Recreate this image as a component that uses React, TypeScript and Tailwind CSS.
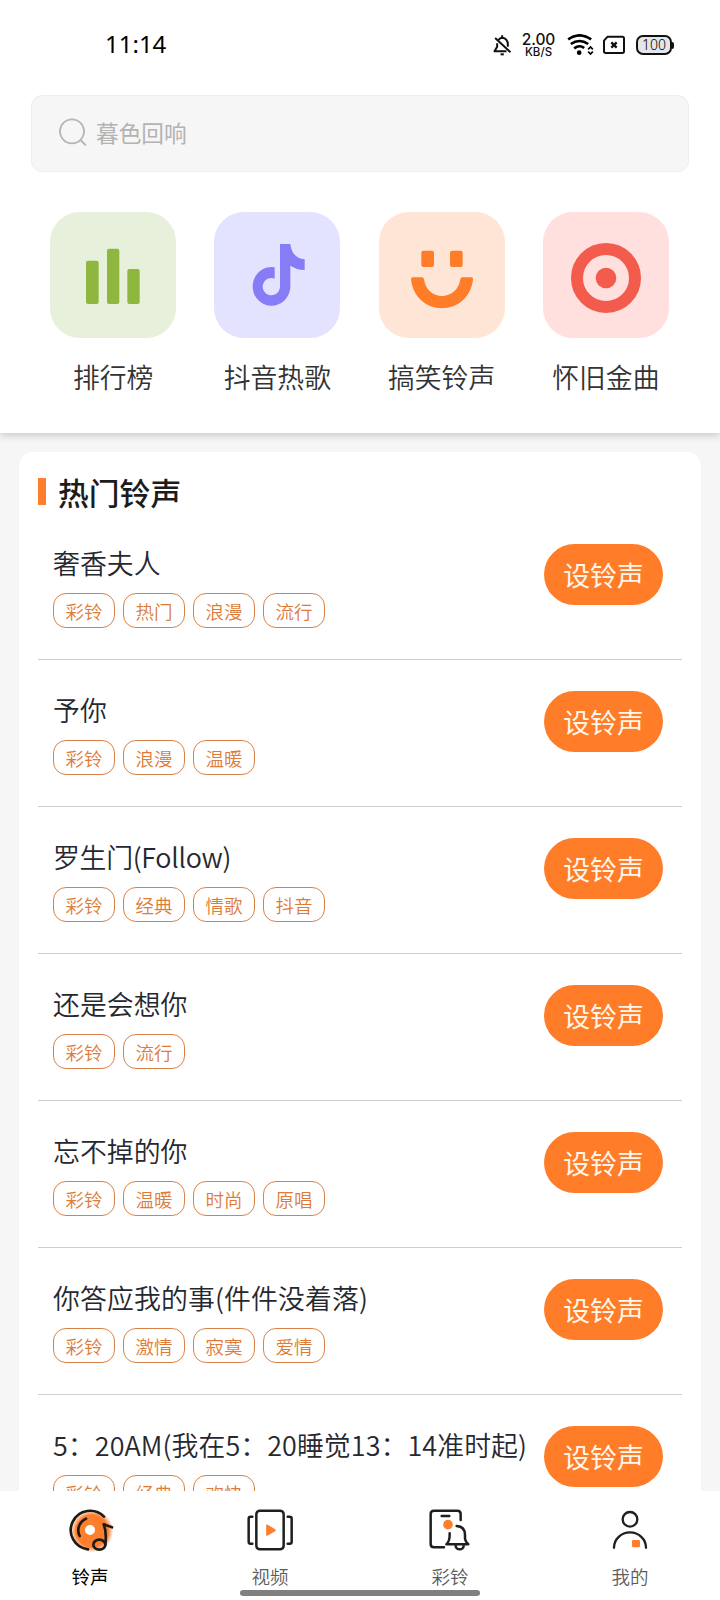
import React from 'react';

const categories = [
  { label: '排行榜', bg: 'bg-[#e7f0da]', icon: <ChartIcon /> },
  { label: '抖音热歌', bg: 'bg-[#e4e3ff]', icon: <NoteIcon /> },
  { label: '搞笑铃声', bg: 'bg-[#ffe5d5]', icon: <SmileIcon /> },
  { label: '怀旧金曲', bg: 'bg-[#ffe0de]', icon: <RecordIcon /> },
];

const songs = [
  { title: '奢香夫人', tags: ['彩铃', '热门', '浪漫', '流行'] },
  { title: '予你', tags: ['彩铃', '浪漫', '温暖'] },
  { title: '罗生门(Follow)', tags: ['彩铃', '经典', '情歌', '抖音'], tracking: 'tracking-[-0.3px]' },
  { title: '还是会想你', tags: ['彩铃', '流行'] },
  { title: '忘不掉的你', tags: ['彩铃', '温暖', '时尚', '原唱'] },
  { title: '你答应我的事(件件没着落)', tags: ['彩铃', '激情', '寂寞', '爱情'], tracking: 'tracking-[0.1px]' },
  { title: '5：20AM(我在5：20睡觉13：14准时起)', tags: ['彩铃', '经典', '欢快'], tracking: 'tracking-[0.08px]' },
];

const tabs = [
  { label: '铃声', icon: <RingtoneTabIcon />, active: true },
  { label: '视频', icon: <VideoTabIcon />, active: false },
  { label: '彩铃', icon: <BellTabIcon />, active: false },
  { label: '我的', icon: <UserTabIcon />, active: false },
];

function ChartIcon() {
  return (
    <svg viewBox="60 36 378 378" className="w-full h-full" fill="#8fb63f">
      <rect x="168" y="182" width="38" height="130" rx="6" />
      <rect x="231" y="146" width="37" height="166" rx="6" />
      <rect x="292" y="207" width="37" height="105" rx="6" />
    </svg>
  );
}

function NoteIcon() {
  return (
    <svg viewBox="553 36 378 378" className="w-full h-full" fill="#867cf6">
      <path d="M751 132H782C785 160 800 176 825 178V210C808 210 795 205 782 197V262A56.5 58 0 1 1 735 202V236A26 26 0 1 0 751 262Z" />
    </svg>
  );
}

function SmileIcon() {
  return (
    <svg viewBox="57 36 378 378" className="w-full h-full" fill="#ff7d29">
      <rect x="184" y="152" width="38" height="49" rx="6" />
      <rect x="270" y="152" width="38" height="49" rx="6" />
      <path d="M158 232H186Q191 232 192 238C196 270 220 288 246 288S297 270 301 238Q302 232 307 232H334Q340 232 339 238C334 290 294 325 246 325S158 290 153 238Q153 232 158 232Z" />
    </svg>
  );
}

function RecordIcon() {
  return (
    <svg viewBox="551 36 378 378" className="w-full h-full">
      <circle cx="740" cy="234" r="87" fill="none" stroke="#f35b4c" strokeWidth="36" />
      <circle cx="740" cy="234" r="31" fill="#f35b4c" />
    </svg>
  );
}

function RingtoneTabIcon() {
  return (
    <svg viewBox="198 318 144 144" className="w-12 h-12" fill="none" stroke="#1d1a18" strokeWidth="8" strokeLinecap="round" strokeLinejoin="round">
      <defs>
        <radialGradient id="disc">
          <stop offset="0.75" stopColor="#fd7e2c" />
          <stop offset="1" stopColor="#fd7e2c" stopOpacity="0" />
        </radialGradient>
      </defs>
      <circle cx="276" cy="393" r="64" fill="url(#disc)" stroke="none" />
      <circle cx="270" cy="390" r="15" fill="#fff" stroke="none" />
      <path d="M312 350A58 58 0 1 0 264 448" />
      <path d="M258 356A38 38 0 0 0 239 408" />
      <ellipse cx="298" cy="434" rx="18" ry="15" />
      <path d="M316 434C319 410 318 390 311 373L336 382" />
    </svg>
  );
}

function VideoTabIcon() {
  return (
    <svg viewBox="738 318 144 144" className="w-12 h-12" fill="none" stroke="#1f1f1f" strokeWidth="7.5" strokeLinecap="round" strokeLinejoin="round">
      <rect x="769" y="332" width="82" height="116" rx="11" />
      <path d="M757 350H752Q746 350 746 356V425Q746 431 752 431H757" />
      <path d="M863 350H869Q875 350 875 356V425Q875 431 869 431H863" />
      <path d="M801 376V405L825 390.500Z" fill="#fd7e2c" stroke="#fd7e2c" strokeWidth="5" />
    </svg>
  );
}

function BellTabIcon() {
  return (
    <svg viewBox="198 318 144 144" className="w-12 h-12" fill="none" stroke="#1f1f1f" strokeWidth="7.5" strokeLinecap="round" strokeLinejoin="round">
      <path d="M302 360V342Q302 332 292 332H222Q212 332 212 342V432Q212 442 222 442H252" />
      <path d="M245 348H268" />
      <circle cx="264" cy="374" r="14.500" fill="#fd7e2c" stroke="none" />
      <path d="M290 378C308 379 315 391 315 405V416Q316 426 325 433H259Q270 423 269 400" />
      <path d="M287 437A12 11 0 0 0 311 437" />
    </svg>
  );
}

function UserTabIcon() {
  return (
    <svg viewBox="738 318 144 144" className="w-12 h-12" fill="none" stroke="#1f1f1f" strokeWidth="7" strokeLinecap="round">
      <circle cx="810" cy="358" r="22" />
      <path d="M762 443A48 46 0 0 1 858 443" />
      <rect x="816" y="420" width="24" height="22" rx="4" fill="#fd7e2c" stroke="none" />
    </svg>
  );
}

function StatusBar() {
  return (
    <div className="h-[95px] pl-[105px] pr-[46px] pb-[5px] flex items-center justify-between text-black">
      <span className="font-['Noto_Sans'] text-[24px] leading-none pb-[2px]">11:14</span>
      <div className="flex items-center">
        <svg viewBox="100 42 56 66" className="w-[19px] h-[22px] mr-[10px]" fill="none" stroke="#111" strokeWidth="6" strokeLinejoin="round">
          <path d="M116 60Q120 53 127 53Q144 55 144 74V80M112 70V80L104 94H140" />
          <path d="M127 46V53M106 54L152 97" />
          <path d="M122 103H132" />
        </svg>
        <div className="w-[33px] mr-[12px] flex flex-col items-center font-['Inter'] text-[#111]">
          <span className="text-[15.500px] font-medium leading-[13px] tracking-[-0.1px]">2.00</span>
          <span className="text-[11.500px] font-medium leading-[12px]">KB/S</span>
        </div>
        <svg viewBox="322 42 80 66" className="w-[27px] h-[22px] mr-[9px]" fill="none" stroke="#000" strokeWidth="8">
          <path d="M325 58Q359 34 394 58" />
          <path d="M333 72Q359 54 385 72" />
          <path d="M343 85Q359 73 373 84" />
          <circle cx="358" cy="98" r="7" fill="#000" stroke="none" />
          <path d="M385 88L392 81L399 88M385 95L392 102L399 95" strokeWidth="5" />
        </svg>
        <svg viewBox="429 42 66 66" className="w-[22px] h-[22px] mr-[11px]" fill="none" stroke="#111" strokeWidth="6" strokeLinejoin="round">
          <path d="M443 50H487Q492 50 492 55V94Q492 99 487 99H437Q432 99 432 94V62Z" />
          <path d="M454 67L470 83M470 67L454 83" strokeWidth="7" />
        </svg>
        <div className="w-[36px] h-5 rounded-[7px] border-2 border-[#111] bg-[#e6e6e6] flex items-center justify-center font-['Noto_Sans'] text-[14px] font-light leading-none">
          100
        </div>
        <div className="w-[2px] h-[7px] rounded-r bg-[#111]" />
      </div>
    </div>
  );
}

function SongRow({ title, tags, tracking = '' }: { title: string; tags: string[]; tracking?: string }) {
  return (
    <li className="h-[147px] shrink-0 border-b border-[#cfcfcf] pl-[15px] pr-[19px] flex justify-between items-start">
      <div className="pt-[33px]">
        <h3 className={`w-[480px] text-[26.900px] leading-[34px] font-[350] text-[#262830] whitespace-nowrap ${tracking}`}>
          {title}
        </h3>
        <div className="mt-[13px] flex gap-2">
          {tags.map((tag) => (
            <span
              key={tag}
              className="w-[62px] h-[35px] pt-px rounded-[13px] border border-[#d98248] text-[#dd7c3a] text-[18.500px] font-[350] leading-none flex items-center justify-center"
            >
              {tag}
            </span>
          ))}
        </div>
      </div>
      <button className="mt-[31px] w-[119px] h-[61px] pt-px shrink-0 rounded-full bg-[#ff7d29] text-[#fff8ea] text-[26.800px] leading-none flex items-center justify-center">
        设铃声
      </button>
    </li>
  );
}

export default function App() {
  return (
    <div className="w-[720px] h-[1600px] overflow-hidden flex flex-col bg-[#f6f6f6] font-['Noto_Sans_CJK_SC',sans-serif]">
      <header className="h-[433px] shrink-0 bg-white shadow-[0_2px_8px_rgba(0,0,0,0.2)]">
        <StatusBar />
        <div className="mx-[31px] h-[77px] rounded-[11px] border border-[#eeeeee] bg-[#f6f6f6] flex items-center pl-[27px]">
          <svg viewBox="178 354 84 84" className="w-7 h-7 mr-[9px] mb-[3px]" fill="none" stroke="#b5b5b5" strokeWidth="5.500">
            <circle cx="217" cy="394" r="36" />
            <path d="M242 420L259 436" />
          </svg>
          <span className="text-[22.700px] leading-none text-[#b3b3b3]">暮色回响</span>
        </div>
        <nav className="ml-[31px] mr-8 mt-10 grid grid-cols-4">
          {categories.map((c) => (
            <div key={c.label} className="flex flex-col items-center">
              <div className={`w-[126px] h-[126px] rounded-[30px] ${c.bg}`}>{c.icon}</div>
              <span className="mt-[22px] text-[26.800px] leading-[34px] font-[350] text-[#333333]">{c.label}</span>
            </div>
          ))}
        </nav>
      </header>

      <main className="flex-1 min-h-0 mt-[19px] mx-[19px] rounded-t-[14px] bg-white px-[19px] overflow-hidden">
        <div className="h-[61px] flex items-start">
          <div className="mt-[26px] w-2 h-[27px] bg-[#fd7e2c]" />
          <h2 className="mt-[21px] ml-[12px] text-[30.800px] leading-[38px] font-medium text-[#1c1c1c]">热门铃声</h2>
        </div>
        <ul className="flex flex-col">
          {songs.map((song) => (
            <SongRow key={song.title} {...song} />
          ))}
        </ul>
      </main>

      <footer className="h-[109px] shrink-0 bg-white flex flex-col">
        <div className="h-[99px] shrink-0 pt-[15px] grid grid-cols-4">
          {tabs.map((tab) => (
            <div key={tab.label} className="flex flex-col items-center">
              {tab.icon}
              <span className={`mt-[9px] text-[18.500px] leading-[26px] ${tab.active ? 'text-black' : 'font-[350] text-[#5c5c5c]'}`}>
                {tab.label}
              </span>
            </div>
          ))}
        </div>
        <div className="mx-auto w-60 h-[6px] rounded-full bg-[#808080]" />
      </footer>
    </div>
  );
}
